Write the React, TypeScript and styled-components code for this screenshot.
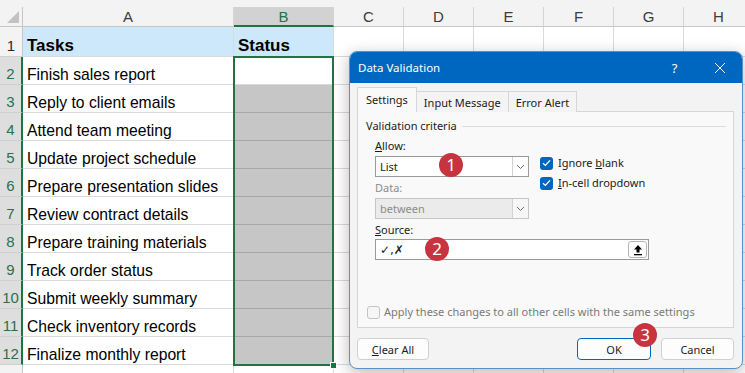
import { Fragment } from "react";
import styled, { createGlobalStyle, css } from "styled-components";

const GlobalStyle = createGlobalStyle`
  html, body { margin: 0; padding: 0; background: #fff; }
  * { box-sizing: border-box; }
`;

const GREEN = "#217346";
const BLUE = "#0067c0";
const UI_FONT = `"Noto Sans", "DejaVu Sans", sans-serif`;

const columns = ["A", "B", "C", "D", "E", "F", "G", "H"];

const tasks = [
  "Finish sales report",
  "Reply to client emails",
  "Attend team meeting",
  "Update project schedule",
  "Prepare presentation slides",
  "Review contract details",
  "Prepare training materials",
  "Track order status",
  "Submit weekly summary",
  "Check inventory records",
  "Finalize monthly report",
];

const Screen = styled.div`
  position: relative;
  width: 745px;
  height: 373px;
  overflow: hidden;
  background: #fff;
  font-family: "Liberation Sans", Arial, sans-serif;
`;

const TopStrip = styled.div`
  height: 7px;
  background: #f3f3f3;
`;

const Sheet = styled.div`
  position: relative;
  display: grid;
  grid-template-columns: 23px 211px 100px repeat(6, 70px);
  grid-template-rows: 20px 30px repeat(12, 28px);
`;

const Corner = styled.div`
  background: #f3f3f3;
  border-bottom: 1px solid #c6c6c6;
  border-right: 1px solid #c6c6c6;
  display: flex;
  align-items: flex-end;
  justify-content: flex-end;
  padding: 0 3px 3px 0;
`;

const Triangle = styled.span`
  width: 0;
  height: 0;
  border-left: 12px solid transparent;
  border-bottom: 12px solid #c2c2c2;
`;

const ColHead = styled.div<{ $selected?: boolean }>`
  background: #f3f3f3;
  border-right: 1px solid #d4d4d4;
  border-bottom: 1px solid #c6c6c6;
  display: flex;
  align-items: center;
  justify-content: center;
  font-size: 15px;
  color: #3c3c3c;
  ${({ $selected }) =>
    $selected &&
    css`
      background: #d2d2d2;
      color: ${GREEN};
      border-bottom: 2px solid ${GREEN};
    `}
`;

const RowHead = styled.div<{ $selected?: boolean }>`
  background: #f3f3f3;
  border-bottom: 1px solid #d0d0d0;
  border-right: 1px solid #c6c6c6;
  display: flex;
  align-items: flex-end;
  justify-content: center;
  padding-bottom: 2px;
  font-size: 15px;
  color: #2a2a2a;
  ${({ $selected }) =>
    $selected &&
    css`
      background: #dedede;
      color: #2f6e4a;
      border-right: 2px solid ${GREEN};
    `}
`;

const Cell = styled.div<{ $fill?: "head" | "shade" }>`
  border-right: 1px solid #dadada;
  border-bottom: 1px solid #dadada;
  padding: 0 4px 0;
  display: flex;
  align-items: flex-end;
  font-size: 15.7px;
  color: #000;
  white-space: nowrap;
  overflow: hidden;
  ${({ $fill }) =>
    $fill === "head" &&
    css`
      background: #cde8fb;
      font-weight: 700;
      font-size: 17px;
      padding-bottom: 0;
    `}
  ${({ $fill }) =>
    $fill === "shade" &&
    css`
      background: #c6c6c6;
      border-bottom-color: #a8a8a8;
      border-right-color: #a8a8a8;
    `}
`;

/* selection outline lies over the B2:B12 cells */
const Selection = styled.div`
  position: absolute;
  left: 233px;
  top: 49px;
  width: 101px;
  height: 310px;
  border: 2px solid ${GREEN};
  pointer-events: none;
`;

const FillHandle = styled.span`
  position: absolute;
  right: -5px;
  bottom: -5px;
  width: 7px;
  height: 7px;
  background: ${GREEN};
  border: 1px solid #fff;
`;

/* ---------- dialog ---------- */

const Dialog = styled.div`
  position: absolute;
  left: 349px;
  top: 51px;
  width: 394px;
  height: 318px;
  background: #f3f3f3;
  border: 1px solid #5c8fc8;
  border-radius: 8px;
  box-shadow: 0 4px 16px rgba(0, 0, 0, 0.28);
  overflow: hidden;
  display: flex;
  flex-direction: column;
  font-family: ${UI_FONT};
  font-size: 11px;
  color: #1b1b1b;
`;

const TitleBar = styled.div`
  height: 31px;
  flex: none;
  background: ${BLUE};
  color: #fff;
  display: flex;
  align-items: center;
  padding-left: 8px;
`;

const Title = styled.div`
  flex: 1;
  font-size: 11.5px;
`;

const TitleButton = styled.div`
  width: 45px;
  height: 31px;
  display: flex;
  align-items: center;
  justify-content: center;
  font-size: 13px;
`;

const Body = styled.div`
  flex: 1;
  padding: 5px 8px 7px 7px;
  display: flex;
  flex-direction: column;
`;

const Tabs = styled.div`
  height: 24px;
  display: flex;
  align-items: flex-end;
  margin-bottom: -1px;
  position: relative;
  z-index: 1;
`;

const Tab = styled.div<{ $active?: boolean }>`
  height: ${({ $active }) => ($active ? 25 : 21)}px;
  padding: 0 ${({ $active }) => ($active ? 8 : 7)}px;
  display: flex;
  align-items: center;
  border: 1px solid #d6d6d6;
  border-bottom: none;
  margin-left: -1px;
  background: ${({ $active }) => ($active ? "#f9f9f9" : "#f4f4f4")};
  padding-bottom: ${({ $active }) => ($active ? 2 : 0)}px;
  &:first-child {
    margin-left: 0;
  }
`;

const Panel = styled.div`
  height: 217px;
  background: #f9f9f9;
  border: 1px solid #d6d6d6;
  padding: 7px 7px 8px 8px;
  display: flex;
  flex-direction: column;
`;

const Legend = styled.div`
  display: flex;
  align-items: center;
  gap: 5px;
  line-height: 14px;
  &::after {
    content: "";
    flex: 1;
    height: 1px;
    background: #dcdcdc;
  }
`;

const Criteria = styled.div`
  padding-left: 9px;
  display: flex;
  flex-direction: column;
`;

const TopRow = styled.div`
  display: flex;
  gap: 11px;
  margin-top: 6px;
`;

const Stack = styled.div`
  display: flex;
  flex-direction: column;
`;

const Label = styled.div<{ $disabled?: boolean; $gap?: number }>`
  line-height: 14px;
  margin-top: ${({ $gap }) => $gap ?? 0}px;
  color: ${({ $disabled }) => ($disabled ? "#8c8c8c" : "#1b1b1b")};
`;

const U = styled.span`
  text-decoration: underline;
  text-underline-offset: 1px;
`;

const Select = styled.div<{ $disabled?: boolean }>`
  width: 154px;
  height: 21px;
  margin-top: 3px;
  display: flex;
  border: 1px solid ${({ $disabled }) => ($disabled ? "#c6c6c6" : "#9a9a9a")};
  background: ${({ $disabled }) => ($disabled ? "#ebebeb" : "#fff")};
  color: ${({ $disabled }) => ($disabled ? "#8c8c8c" : "#1b1b1b")};
`;

const SelectText = styled.div`
  flex: 1;
  padding-left: 4px;
  display: flex;
  align-items: center;
`;

const Chevron = styled.div<{ $disabled?: boolean }>`
  width: 16px;
  border-left: 1px solid #d2d2d2;
  background: ${({ $disabled }) => ($disabled ? "#f7f7f7" : "#fff")};
  display: flex;
  align-items: center;
  justify-content: center;
`;

const Checks = styled.div`
  margin-top: 17px;
  display: flex;
  flex-direction: column;
  gap: 6px;
`;

const CheckRow = styled.div<{ $disabled?: boolean }>`
  display: flex;
  align-items: center;
  gap: 5px;
  line-height: 14px;
  color: ${({ $disabled }) => ($disabled ? "#7a7a7a" : "#1b1b1b")};
`;

const Box = styled.span<{ $checked?: boolean }>`
  width: 13px;
  height: 13px;
  border-radius: 3px;
  flex: none;
  display: flex;
  align-items: center;
  justify-content: center;
  ${({ $checked }) =>
    $checked
      ? css`
          background: ${BLUE};
        `
      : css`
          background: #f6f6f6;
          border: 1px solid #c4c4c4;
        `}
`;

const SourceInput = styled.div`
  width: 274px;
  height: 21px;
  margin-top: 2px;
  border: 1px solid #9a9a9a;
  background: #fff;
  display: flex;
  align-items: center;
  padding: 0 1px 0 4px;
`;

const SourceText = styled.div`
  flex: 1;
  font-family: "DejaVu Sans", sans-serif;
  font-size: 12px;
`;

const RefButton = styled.div`
  width: 19px;
  height: 17px;
  border: 1px solid #b5b5b5;
  border-radius: 3px;
  background: #fdfdfd;
  display: flex;
  align-items: center;
  justify-content: center;
`;

const ApplyRow = styled(CheckRow)`
  margin-top: auto;
  padding-left: 1px;
  gap: 4px;
`;

const Buttons = styled.div`
  margin-top: 10px;
  display: flex;
  gap: 10px;
`;

const Button = styled.div<{ $primary?: boolean; $width: number; $push?: boolean }>`
  width: ${({ $width }) => $width}px;
  height: 22px;
  border: 1px solid ${({ $primary }) => ($primary ? BLUE : "#d0d0d0")};
  border-radius: 4px;
  background: #fdfdfd;
  display: flex;
  align-items: center;
  justify-content: center;
  margin-left: ${({ $push }) => ($push ? "auto" : "0")};
`;

const Badge = styled.div<{ $x: number; $y: number }>`
  position: absolute;
  left: ${({ $x }) => $x}px;
  top: ${({ $y }) => $y}px;
  width: 24px;
  height: 24px;
  border-radius: 50%;
  background: #c7343f;
  color: #fff;
  font-family: "Noto Sans", sans-serif;
  font-size: 17px;
  line-height: 24px;
  text-align: center;
  z-index: 3;
`;

const ChevronIcon = ({ color }: { color: string }) => (
  <svg width="9" height="6" viewBox="0 0 9 6">
    <path d="M1 1 L4.5 4.5 L8 1" fill="none" stroke={color} strokeWidth="1" />
  </svg>
);

const CheckIcon = () => (
  <svg width="9" height="8" viewBox="0 0 9 8">
    <path d="M1 4.2 L3.4 6.4 L8 1.4" fill="none" stroke="#fff" strokeWidth="1.3" />
  </svg>
);

const CloseIcon = () => (
  <svg width="12" height="12" viewBox="0 0 12 12">
    <path d="M1 1 L11 11 M11 1 L1 11" stroke="#fff" strokeWidth="1" />
  </svg>
);

const CollapseIcon = () => (
  <svg width="10" height="12" viewBox="0 0 10 12">
    <path d="M5 1 L9 5.5 H6.5 V8.5 H3.5 V5.5 H1 Z" fill="#000" />
    <rect x="1" y="10" width="8" height="1.3" fill="#000" />
  </svg>
);

export default function App() {
  return (
    <Screen>
      <GlobalStyle />
      <TopStrip />
      <Sheet>
        <Corner>
          <Triangle />
        </Corner>
        {columns.map((c) => (
          <ColHead key={c} $selected={c === "B"}>
            {c}
          </ColHead>
        ))}

        <RowHead>1</RowHead>
        <Cell $fill="head">Tasks</Cell>
        <Cell $fill="head">Status</Cell>
        {columns.slice(2).map((c) => (
          <Cell key={c} />
        ))}

        {tasks.map((t, i) => (
          <Fragment key={t}>
            <RowHead $selected>{i + 2}</RowHead>
            <Cell>{t}</Cell>
            <Cell $fill={i === 0 ? undefined : "shade"} />
            {columns.slice(2).map((c) => (
              <Cell key={c} />
            ))}
          </Fragment>
        ))}

        <RowHead>13</RowHead>
        {columns.map((c) => (
          <Cell key={"13" + c} />
        ))}

        <Selection>
          <FillHandle />
        </Selection>
      </Sheet>

      <Dialog>
        <TitleBar>
          <Title>Data Validation</Title>
          <TitleButton>?</TitleButton>
          <TitleButton>
            <CloseIcon />
          </TitleButton>
        </TitleBar>
        <Body>
          <Tabs>
            <Tab $active>Settings</Tab>
            <Tab>Input Message</Tab>
            <Tab>Error Alert</Tab>
          </Tabs>
          <Panel>
            <Legend>Validation criteria</Legend>
            <Criteria>
              <TopRow>
                <Stack>
                  <Label>
                    <U>A</U>llow:
                  </Label>
                  <Select>
                    <SelectText>List</SelectText>
                    <Chevron>
                      <ChevronIcon color="#6a6a6a" />
                    </Chevron>
                  </Select>
                  <Label $disabled $gap={4}>
                    Data:
                  </Label>
                  <Select $disabled>
                    <SelectText>between</SelectText>
                    <Chevron $disabled>
                      <ChevronIcon color="#6a6a6a" />
                    </Chevron>
                  </Select>
                </Stack>
                <Checks>
                  <CheckRow>
                    <Box $checked>
                      <CheckIcon />
                    </Box>
                    <span>
                      Ignore <U>b</U>lank
                    </span>
                  </CheckRow>
                  <CheckRow>
                    <Box $checked>
                      <CheckIcon />
                    </Box>
                    <span>
                      <U>I</U>n-cell dropdown
                    </span>
                  </CheckRow>
                </Checks>
              </TopRow>
              <Label $gap={4}>
                <U>S</U>ource:
              </Label>
              <SourceInput>
                <SourceText>✓,✗</SourceText>
                <RefButton>
                  <CollapseIcon />
                </RefButton>
              </SourceInput>
            </Criteria>
            <ApplyRow $disabled>
              <Box />
              <span>Apply these changes to all other cells with the same settings</span>
            </ApplyRow>
          </Panel>
          <Buttons>
            <Button $width={72}>
              <span>
                <U>C</U>lear All
              </span>
            </Button>
            <Button $width={74} $primary $push>
              OK
            </Button>
            <Button $width={73}>Cancel</Button>
          </Buttons>
        </Body>
        <Badge $x={89} $y={101}>1</Badge>
        <Badge $x={75} $y={185}>2</Badge>
        <Badge $x={283} $y={271}>3</Badge>
      </Dialog>
    </Screen>
  );
}
